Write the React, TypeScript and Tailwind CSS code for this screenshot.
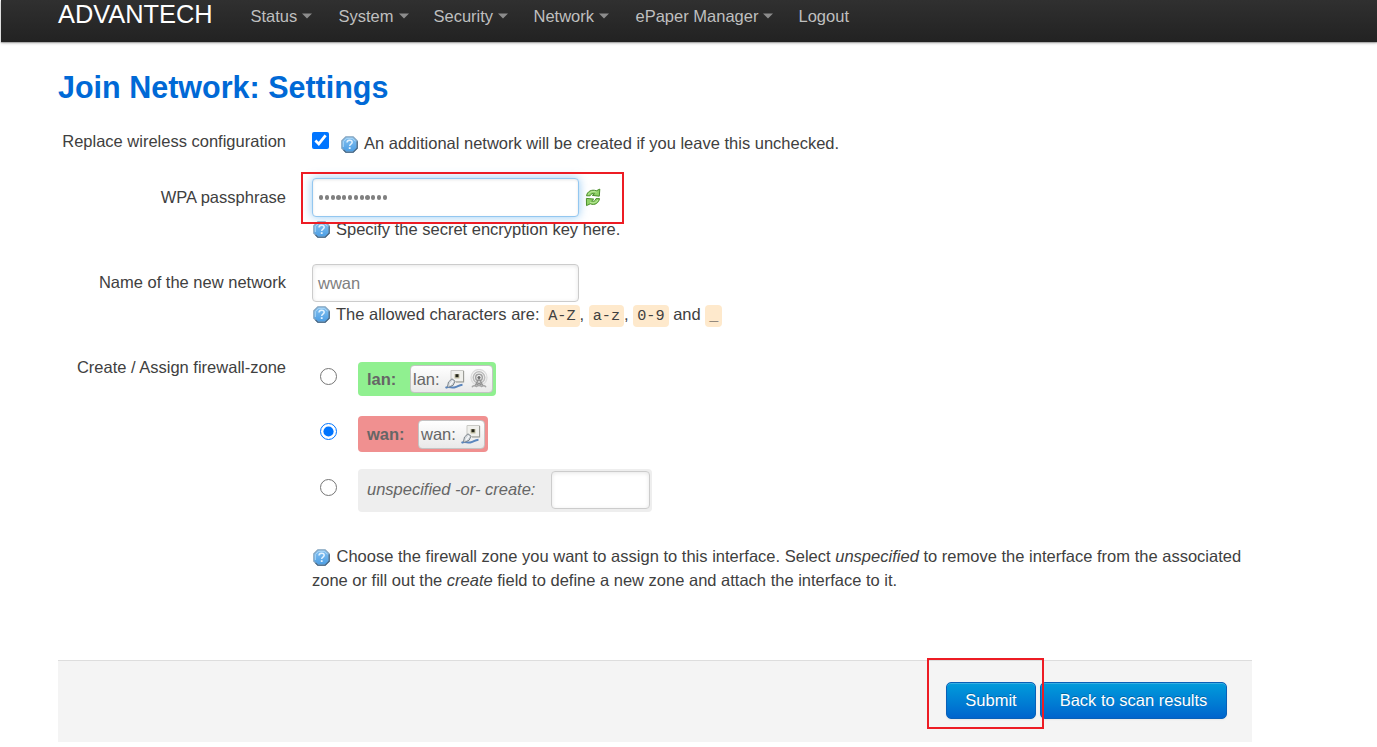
import React from "react";

function HelpIcon({ className = "" }: { className?: string }) {
  return (
    <svg className={`inline-block shrink-0 ${className}`} width="17" height="17" viewBox="0 0 17 17">
      <defs>
        <linearGradient id="help" x1="0" y1="0" x2="0" y2="1">
          <stop offset="0" stopColor="#86c2f0" />
          <stop offset="1" stopColor="#4a9de4" />
        </linearGradient>
      </defs>
      <path d="M4.800 .8h7.400L16.200 4.800v7.400L12.200 16.200H4.800L.8 12.200V4.800z" fill="url(#help)" stroke="#86a5bf" strokeWidth="1.200" />
      <path d="M16.200 5.200v7L12.200 16.200H4.800L2.500 13.900" fill="none" stroke="#44637f" strokeWidth="1.100" />
      <path d="M2.300 11V5.500l3.200-3.200h6l3 3" fill="none" stroke="#b5dcf8" strokeWidth=".9" />
      <path d="M6 6.500c.1-3 5.200-3 5.200-.2 0 1.900-2.500 1.700-2.500 3.600" fill="none" stroke="#e4f3ff" strokeWidth="1.500" />
      <rect x="7.800" y="11.200" width="1.800" height="1.800" fill="#e4f3ff" />
    </svg>
  );
}

function ReloadIcon() {
  return (
    <svg width="17" height="19" viewBox="0 0 17 19" className="shrink-0">
      <g fill="#8fd267" stroke="#4b8f2d" strokeWidth="1" strokeLinejoin="round">
        <path d="M1.500 7.800C2 3.600 6.800.9 11.300 2.800L14.800 1.100 14.300 8.200 7.300 7.400 9.600 5.700C8 5 5.800 5.800 5.100 7.800z" />
        <path d="M14.500 10.600C13.800 15 9.800 17.700 5.300 15.800L1.500 17.600 1.400 10.400 8.700 11.100 6.700 13C8.700 13.700 10.300 12.800 11 10.600z" />
      </g>
      <path d="M3.500 6.500C4.500 3.800 8.500 2.800 11.600 4.200M12.800 12C11.500 14.600 8 15.600 5 14.200" fill="none" stroke="#c6eda9" strokeWidth=".9" />
    </svg>
  );
}

function EthernetIcon() {
  return (
    <svg width="21" height="21" viewBox="0 0 21 21" className="shrink-0">
      <path d="M7 1.500h12.500v11.300H7z" fill="#f0f0ec" stroke="#c9c9c5" />
      <path d="M19.600 2v11H12" fill="none" stroke="#9a9b95" strokeWidth="1.100" />
      <path d="M10.500 5h5v4.500h-5z" fill="#c4c1a4" />
      <path d="M11.500 5.200h3v3h-3z" fill="#24251b" />
      <path d="M1.500 18.800c4-2.300 6 .6 9.500-.5 3-.8 3.800-2.300 7.500-2.600" fill="none" stroke="#5b86bd" strokeWidth="2" />
      <path d="M3.500 17.500 4.500 13l3.500-3.200 3 2.400-1.800 4-4.500 2z" fill="#d5dade" stroke="#7d858c" />
      <path d="m6 16 3-4.200" stroke="#f7f8fa" strokeWidth="1.300" />
    </svg>
  );
}

function WirelessIcon() {
  return (
    <svg width="20" height="20" viewBox="0 0 20 20" className="shrink-0" fill="none">
      <circle cx="10" cy="8.500" r="8" stroke="#dcdcdc" strokeWidth="1.300" />
      <circle cx="10" cy="8.500" r="5.700" stroke="#bdbdbd" strokeWidth="1.600" />
      <circle cx="10" cy="8.500" r="3.300" stroke="#a2a2a2" strokeWidth="1.500" />
      <circle cx="10" cy="8.500" r="1.600" fill="#6b6b6b" />
      <path d="m9.500 10-3.500 7m4.500-7 3.500 7M7.500 13.500l5 2.500m0-2.500-5 2.500" stroke="#8f8f8f" strokeWidth="1.100" />
      <path d="M3 18.300c1-2 3-2 4.500-.8 1.500-1.200 3.500-1.200 5 0 1.500-1.200 3.500-1.200 4.500.8" stroke="#a5a5a5" strokeWidth="1.400" />
    </svg>
  );
}

const menu = [
  { text: "Status", width: "w-[88px]", caret: true },
  { text: "System", width: "w-[95px]", caret: true },
  { text: "Security", width: "w-[100px]", caret: true },
  { text: "Network", width: "w-[102px]", caret: true },
  { text: "ePaper Manager", width: "w-[163px]", caret: true },
  { text: "Logout", width: "w-[60px]", caret: false },
];

function Label({ children }: { children: React.ReactNode }) {
  return <div className="mr-[26px] h-6 w-[228px] shrink-0 text-right leading-6">{children}</div>;
}

function Code({ children }: { children: React.ReactNode }) {
  return (
    <code className="rounded-[4px] bg-[#fee9cc] px-[4px] py-[2px] text-[15.2px] leading-[17px]" style={{ fontFamily: '"Liberation Mono", monospace' }}>
      {children}
    </code>
  );
}

function Radio({ checked = false }: { checked?: boolean }) {
  return <input type="radio" name="zone" defaultChecked={checked} className="m-0 ml-2 size-[17px] shrink-0" />;
}

const field = "rounded-[4px] border-[1.5px] border-[#ccc] bg-white shadow-[inset_0_1px_4px_rgba(0,0,0,0.1)]";
const port = "flex items-center rounded-[4px] border border-[#c4c4c4] bg-linear-to-b from-white to-[#e9e9e9] text-[#666]";
const button =
  "h-[37px] rounded-[5px] border border-[#0860b8] bg-linear-to-b from-[#049cdb] to-[#0064cd] text-center text-[16.5px] leading-[33px] text-white [text-shadow:0_-1px_0_rgba(0,0,0,0.25)] shadow-[inset_0_1px_0_rgba(255,255,255,0.2),0_1px_2px_rgba(0,0,0,0.05)]";

export default function App() {
  return (
    <div
      className="h-[747px] w-[1377px] overflow-hidden bg-white text-[16.5px] text-[#404040]"
      style={{ fontFamily: '"Liberation Sans", Arial, sans-serif' }}
    >
      <header className="ml-px flex h-[42px] bg-linear-to-b from-[#303030] to-[#222] pl-[57px] shadow-[0_1px_3px_rgba(0,0,0,0.25),0_1px_1px_rgba(0,0,0,0.2)]">
        <div className="w-[192.5px] text-[25.4px] leading-[28px] text-white">ADVANTECH</div>
        <nav className="flex text-[#bfbfbf]">
          {menu.map((m) => (
            <a key={m.text} className={`flex h-8 items-center ${m.width}`}>
              {m.text}
              {m.caret && (
                <svg width="10" height="6" viewBox="0 0 10 6" className="ml-[5px]">
                  <path d="M0 .5h10L5 5.500z" fill="#8c8c8c" />
                </svg>
              )}
            </a>
          ))}
        </nav>
      </header>

      <main className="ml-[58px] w-[1194px]">
        <h1 className="mb-px pt-[25px] text-[30.5px] leading-10 font-bold text-[#0069d6]">Join Network: Settings</h1>

        <div className="flex h-[60px] pt-[21px]">
          <Label>Replace wireless configuration</Label>
          <input type="checkbox" defaultChecked className="m-0 mt-[3px] size-[17px]" />
          <HelpIcon className="mt-[7px] ml-[12px]" />
          <span className="mt-[2px] ml-[6px] leading-6">An additional network will be created if you leave this unchecked.</span>
        </div>

        <div className="relative flex h-[86px] pt-[10px]">
          <div className="pt-[7px]">
            <Label>WPA passphrase</Label>
          </div>
          <div>
            <div className="flex h-[39px] items-center">
              <div className="flex h-[39px] w-[267px] items-center gap-[1.62px] rounded-[4px] border-[1.5px] border-[#93c7f0] bg-white pl-[6px] shadow-[inset_0_1px_3px_rgba(0,0,0,0.1),0_0_10px_rgba(82,168,236,0.6)]">
                {Array.from({ length: 12 }, (_, i) => (
                  <i key={i} className="size-[4.2px] rounded-full bg-[#808080]" />
                ))}
              </div>
              <div className="ml-[6px]">
                <ReloadIcon />
              </div>
            </div>
            <div className="flex h-6 items-center">
              <HelpIcon className="mr-[6px] ml-px" />
              Specify the secret encryption key here.
            </div>
          </div>
          <div className="absolute top-[4px] left-[243px] h-[52px] w-[323px] border-2 border-[#ed1c24]" />
        </div>

        <div className="flex h-[85px] pt-[10px]">
          <div className="pt-[6px]">
            <Label>Name of the new network</Label>
          </div>
          <div>
            <div className={`${field} h-[38px] w-[267px] pl-[5px] leading-[36px] text-[#808080]`}>wwan</div>
            <div className="flex h-6 items-center">
              <HelpIcon className="mr-[6px] ml-px" />
              <span>
                The allowed characters are: <Code>A-Z</Code>, <Code>a-z</Code>, <Code>0-9</Code> and <Code>_</Code>
              </span>
            </div>
          </div>
        </div>

        <div className="flex pt-[16px]">
          <Label>Create / Assign firewall-zone</Label>
          <div className="pt-[7px]">
            <div className="flex h-[34px]">
              <div className="flex w-[46px] pt-[6px]">
                <Radio />
              </div>
              <div className="flex h-[34px] w-[138px] items-center rounded-[4px] bg-[#90f090] pl-[9px]">
                <b className="w-[43px] text-[#666]">lan:</b>
                <div className={`${port} h-[28px] w-[83px] gap-[4px] pl-[2px]`}>
                  lan: <EthernetIcon />
                  <WirelessIcon />
                </div>
              </div>
            </div>
            <div className="mt-5 flex h-9">
              <div className="flex w-[46px] pt-[7px]">
                <Radio checked />
              </div>
              <div className="flex h-9 w-[130px] items-center rounded-[4px] bg-[#f09090] pl-[9px]">
                <b className="w-[51px] text-[#666]">wan:</b>
                <div className={`${port} h-[29px] w-[67px] gap-[4px] pl-[2px]`}>
                  wan: <EthernetIcon />
                </div>
              </div>
            </div>
            <div className="mt-[17px] flex h-[43px]">
              <div className="flex w-[46px] pt-[10px]">
                <Radio />
              </div>
              <div className="flex h-[43px] w-[294px] rounded-[4px] bg-[#eee] pt-[2px] pl-[9px]">
                <em className="w-[184px] leading-[37px] text-[#666]">unspecified -or- create:</em>
                <div className={`${field} h-[38px] w-[99px]`} />
              </div>
            </div>
            <p className="mt-8 w-[940px] leading-6 whitespace-nowrap">
              <HelpIcon className="mr-[6.5px] ml-px align-[-4px]" />
              <span className="tracking-[0.01px]">
                Choose the firewall zone you want to assign to this interface. Select <em>unspecified</em> to remove the interface from the associated
              </span>
              <br />
              zone or fill out the <em>create</em> field to define a new zone and attach the interface to it.
            </p>
          </div>
        </div>

        <footer className="relative mt-[68px] flex h-[82px] justify-end gap-[4px] border-t border-[#ddd] bg-[#f4f4f4] pt-[21px] pr-[25px]">
          <button className={`${button} w-[90px]`}>Submit</button>
          <button className={`${button} w-[187px]`}>Back to scan results</button>
          <div className="absolute top-[-3px] left-[869px] h-[71px] w-[117px] border-2 border-[#ed1c24]" />
        </footer>
      </main>
    </div>
  );
}
